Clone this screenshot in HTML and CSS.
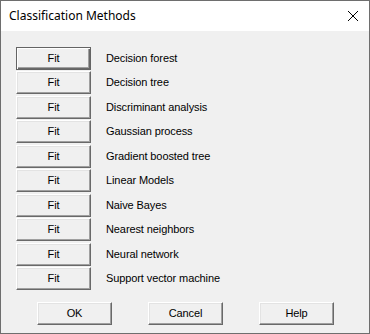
FILE: index.html
```html
<!DOCTYPE html>
<html>
<head>
<meta charset="utf-8">
<link rel="stylesheet" href="styles.css">
</head>
<body>
<div class="window">
  <div class="titlebar">
    <span class="title">Classification Methods</span>
    <svg class="close" width="12" height="12" viewBox="0 0 12 12"><path d="M1 1 L11 11 M11 1 L1 11" stroke="#000" stroke-width="1" fill="none"/></svg>
  </div>
  <div class="content">
    <div class="list">
      <div class="row"><button class="btn default">Fit</button><span class="label">Decision forest</span></div>
      <div class="row"><button class="btn">Fit</button><span class="label">Decision tree</span></div>
      <div class="row"><button class="btn">Fit</button><span class="label">Discriminant analysis</span></div>
      <div class="row"><button class="btn">Fit</button><span class="label">Gaussian process</span></div>
      <div class="row"><button class="btn">Fit</button><span class="label">Gradient boosted tree</span></div>
      <div class="row"><button class="btn">Fit</button><span class="label">Linear Models</span></div>
      <div class="row"><button class="btn">Fit</button><span class="label">Naive Bayes</span></div>
      <div class="row"><button class="btn">Fit</button><span class="label">Nearest neighbors</span></div>
      <div class="row"><button class="btn">Fit</button><span class="label">Neural network</span></div>
      <div class="row"><button class="btn">Fit</button><span class="label">Support vector machine</span></div>
    </div>
    <div class="actions">
      <button class="btn">OK</button>
      <button class="btn">Cancel</button>
      <button class="btn">Help</button>
    </div>
  </div>
</div>
</body>
</html>
```

FILE: styles.css
```css
html, body {
  margin: 0;
  padding: 0;
  background: #f0f0f0;
}
.window {
  width: 370px;
  height: 334px;
  box-sizing: border-box;
  border: 1px solid #6e6e6e;
  background: #f0f0f0;
  display: flex;
  flex-direction: column;
}
.titlebar {
  height: 30px;
  background: #ffffff;
  display: flex;
  align-items: center;
  justify-content: space-between;
  padding: 0 9px 0 8px;
}
.title {
  font-family: "Noto Sans", "Open Sans", sans-serif;
  font-size: 12px;
  color: #000;
  position: relative;
  top: -1px;
}
.close {
  display: block;
  margin-right: 1px;
}
.content {
  flex: 1;
  display: flex;
  flex-direction: column;
  padding: 16px 15px 0 15px;
}
.list {
  display: flex;
  flex-direction: column;
}
.row {
  height: 24.44px;
  display: flex;
  align-items: flex-start;
  gap: 15px;
}
.btn {
  width: 75px;
  height: 23px;
  box-sizing: border-box;
  margin: 0;
  padding: 0 0 1px 0;
  background: #f0f0f0;
  border: 1px solid;
  border-color: #ffffff #696969 #696969 #ffffff;
  box-shadow: inset -1px -1px 0 #a0a0a0, inset 1px 1px 0 #e3e3e3;
  font-family: "Liberation Sans", Arial, sans-serif;
  font-size: 11px;
  letter-spacing: -0.1px;
  color: #000;
  line-height: 20px;
  text-align: center;
}
.btn.default {
  border-color: #646464;
  box-shadow: inset 1px 1px 0 #ffffff, inset -1px -1px 0 #696969, inset -2px -2px 0 #a0a0a0;
}
.label {
  font-family: "Liberation Sans", Arial, sans-serif;
  font-size: 11px;
  letter-spacing: -0.1px;
  color: #000;
  line-height: 23px;
}
.actions {
  display: flex;
  gap: 36px;
  padding-left: 21px;
  margin-top: 10.6px;
}
```
